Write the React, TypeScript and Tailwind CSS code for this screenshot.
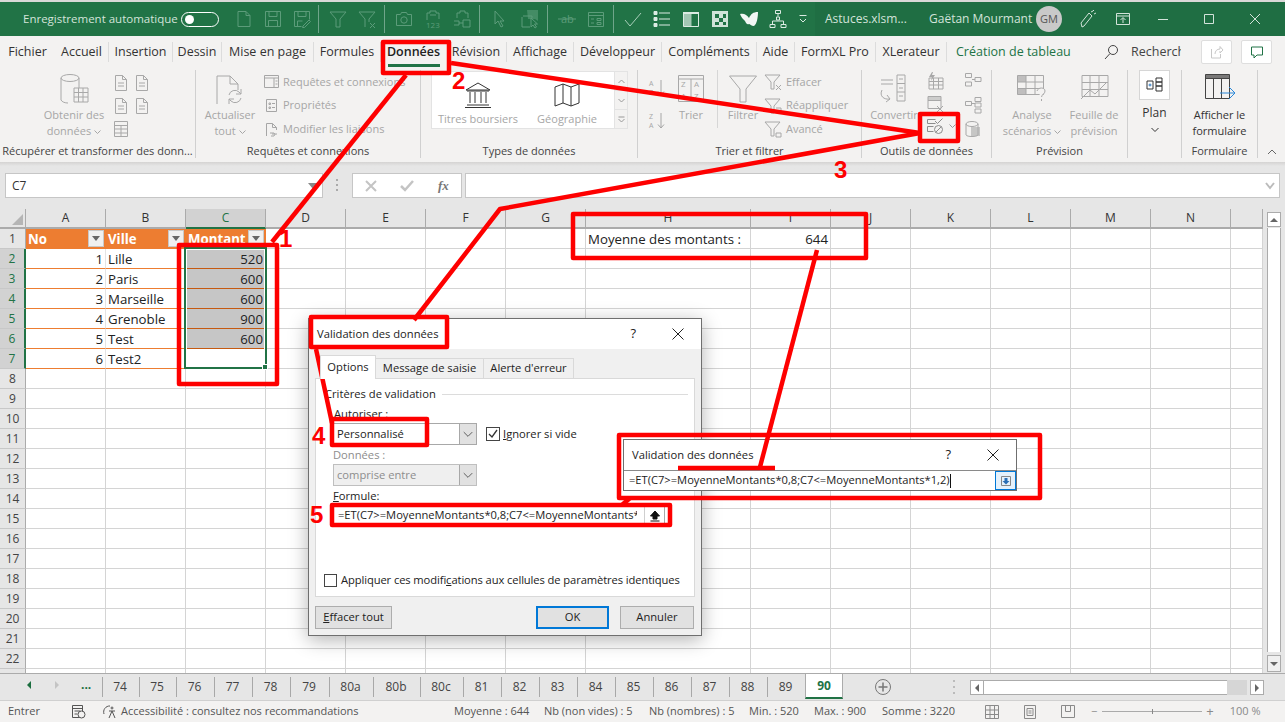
import React from 'react';

const cols = ['A', 'B', 'C', 'D', 'E', 'F', 'G', 'H', 'I', 'J', 'K', 'L', 'M', 'N', ''];
const colW = ['w-[80px]', 'w-[80px]', 'w-[80px]', 'w-[80px]', 'w-[80px]', 'w-[80px]', 'w-[80px]', 'w-[165px]', 'w-[80px]', 'w-[80px]', 'w-[80px]', 'w-[80px]', 'w-[80px]', 'w-[80px]', 'w-[32px]'];
const rows = Array.from({ length: 23 }, (_, i) => i + 1);
const table: Record<number, [string, string, string]> = {
  2: ['1', 'Lille', '520'],
  3: ['2', 'Paris', '600'],
  4: ['3', 'Marseille', '600'],
  5: ['4', 'Grenoble', '900'],
  6: ['5', 'Test', '600'],
  7: ['6', 'Test2', ''],
};
const tabs = [
  ['Fichier', 'w-[55px]', ''],
  ['Accueil', 'w-[54px]', 'sep'],
  ['Insertion', 'w-[64px]', 'sep'],
  ['Dessin', 'w-[49px]', 'sep'],
  ['Mise en page', 'w-[92px]', 'sep'],
  ['Formules', 'w-[67px]', 'sep'],
  ['Données', 'w-[65px]', 'active'],
  ['Révision', 'w-[61px]', 'sep'],
  ['Affichage', 'w-[67px]', 'sep'],
  ['Développeur', 'w-[88px]', 'sep'],
  ['Compléments', 'w-[95px]', 'sep'],
  ['Aide', 'w-[38px]', 'sep'],
  ['FormXL Pro', 'w-[81px]', 'sep'],
  ['XLerateur', 'w-[71px]', 'sep'],
];
const sheetTabs = [
  ['74', 'w-[37px]'], ['75', 'w-[37px]'], ['76', 'w-[38px]'], ['77', 'w-[38px]'], ['78', 'w-[38px]'], ['79', 'w-[39px]'],
  ['80a', 'w-[44px]'], ['80b', 'w-[47px]'], ['80c', 'w-[43px]'], ['81', 'w-[38px]'], ['82', 'w-[38px]'], ['83', 'w-[38px]'],
  ['84', 'w-[38px]'], ['85', 'w-[38px]'], ['86', 'w-[38px]'], ['87', 'w-[38px]'], ['88', 'w-[38px]'], ['89', 'w-[38px]'],
];

function Ic({ w = 20, h = 20, vb, children, className = '' }: { w?: number; h?: number; vb?: string; children: React.ReactNode; className?: string }) {
  return (
    <svg width={w} height={h} viewBox={vb ?? `0 0 ${w} ${h}`} fill="none" stroke="currentColor" strokeWidth="1" className={`shrink-0 ${className}`}>
      {children}
    </svg>
  );
}

function TitleSlot({ children, w = 'w-[29px]' }: { children: React.ReactNode; w?: string }) {
  return <div className={`${w} flex justify-center`}>{children}</div>;
}

function TitleSep({ className = 'ml-[3px] mr-[4px]' }: { className?: string }) {
  return <div className={`h-[28px] w-px bg-[#6fa58a] ${className}`} />;
}

function TitleIcons() {
  return (
    <div className="ml-[10px] flex w-[586px] items-center text-[#5c9c7a]">
      <TitleSlot><Ic><path d="M4 2.5h8l4 4v11H4zM12 2.5v4h4" /></Ic></TitleSlot>
      <TitleSlot><Ic><path d="M2.5 2.5h15v15h-15zM6 2.5v5h8v-5M5.5 17.5v-6h9v6" /></Ic></TitleSlot>
      <TitleSlot><Ic><path d="M2.5 2.5h15v8M2.5 2.5v15h7M6 2.5v5h8v-5M5.5 17v-5h5M11 17l6-6 1.5 1.5-6 6h-2z" /></Ic></TitleSlot>
      <TitleSep className="ml-[2px] mr-[4px]" />
      <TitleSlot><Ic><path d="M2 3h16l-6 7v8h-4v-8z" /></Ic></TitleSlot>
      <TitleSlot><Ic><path d="M2 3h16l-6 7v3M8 18v-8L2 3M13 14l5 5M18 14l-5 5" /></Ic></TitleSlot>
      <TitleSep />
      <TitleSlot><Ic><path d="M2.5 5.5h4l1-2h5l1 2h4v11h-15z" /><circle cx="10" cy="11" r="3.2" /></Ic></TitleSlot>
      <TitleSlot><Ic><path d="M4 11V4h3V2h6v2h3v6M7 6h6" /><text x="3" y="19" fontSize="8" stroke="none" fill="currentColor">123</text></Ic></TitleSlot>
      <TitleSlot><Ic><path d="M5 9V4h3V2h5v2h3v5M2 12h5v4H2M11 11h7v7h-7zM7 14h4" /></Ic></TitleSlot>
      <TitleSep />
      <TitleSlot><Ic><path d="M6 2v13l3-3 3 6 2-1-3-5h4z" /></Ic></TitleSlot>
      <TitleSlot w="w-[31px]"><Ic><path d="M4 7h9v2M3 8v10h8" /><path d="M8 1h11v11l-3-2H9z" fill="currentColor" stroke="none" opacity=".6" /><path d="M12 9v9l2-2 2 3 1.5-1-2-3h3z" /></Ic></TitleSlot>
      <TitleSep />
      <TitleSlot><Ic><path d="M1 10h18" /><text x="4" y="14" fontSize="11" stroke="none" fill="currentColor">ab</text></Ic></TitleSlot>
      <TitleSlot><Ic><path d="M2.5 3.5h15v14h-15zM2.5 6.5h15M5 10h3M5 14h3M11 9.5h4v2h-4zM11 13.5h4v2h-4z" /></Ic></TitleSlot>
      <TitleSep />
      <TitleSlot><Ic className="text-[#a9cfba]"><path d="M2 11l5 6L18 4" /></Ic></TitleSlot>
      <TitleSlot><Ic className="text-[#dcebe3]"><path d="M7 4h11M7 10h11M7 16h11" /><path d="M2 2.5h3v3H2zM2 8.5h3v3H2zM2 14.5h3v3H2z" fill="currentColor" /></Ic></TitleSlot>
      <TitleSlot><Ic className="text-[#dcebe3]"><path d="M2.5 3.5h15v14h-15z" /><path d="M2.5 5h8v12.5h-8z" fill="currentColor" opacity=".7" stroke="none" /><path d="M2 4h16" strokeWidth="2" /></Ic></TitleSlot>
      <TitleSlot><Ic className="text-[#cfe3d8]"><path d="M2 2h16v16H2z" fill="currentColor" stroke="none" /><path d="M5 5h4v4H5zM13 5h3v4h-3zM9 9h4v4H9zM5 13h4v3H5zM13 13h3v3h-3z" fill="#217346" stroke="none" /></Ic></TitleSlot>
      <TitleSlot><Ic className="text-[#f2f7f4]"><path d="M1 5c4-1 7 1 9 4 2-4 4-6 9-6 0 5-1 12-4 14-3 0-4-2-5-2-2 1-3-1-4-3C4 10 2 8 1 5z" fill="currentColor" stroke="none" /></Ic></TitleSlot>
      <TitleSlot><Ic className="text-[#dcebe3]"><path d="M7.5 1.5h5v3h-5zM2 15.5h5v3H2zM13 15.5h5v3h-5zM4.5 15v-3h11v3M10 4.5v3M8.5 8h3v3h-3z" /></Ic></TitleSlot>
      <TitleSlot w="w-[22px]"><Ic w={12} h={12} className="text-[#dcebe3]"><path d="M2.5 2.5h7M3 6l3 3 3-3" /></Ic></TitleSlot>
    </div>
  );
}

function TitleBar() {
  return (
    <div className="flex h-[36px] shrink-0 border-t-2 border-[#dad9d8] bg-[#217346] text-[12px]">
      <div className="ml-[23px] flex w-[158px] items-center text-[11.5px] whitespace-nowrap text-[#d3e3da]">Enregistrement automatique</div>
      <div className="flex w-[38px] items-center">
        <div className="flex h-[15px] w-[38px] items-center rounded-full border border-white pl-[3px]">
          <div className="h-[9px] w-[9px] rounded-full bg-white" />
        </div>
      </div>
      <TitleIcons />
      <div className="flex flex-1 items-center bg-[#1f6e43] text-[#d3e3da]">
        <span className="ml-[10px] w-[104px]">Astuces.xlsm...</span>
        <span className="w-[107px]">Gaëtan Mourmant</span>
        <div className="flex h-[26px] w-[26px] items-center justify-center rounded-full bg-[#c9c9c9] text-[11px] text-[#555]">GM</div>
        <Ic className="ml-[15px] text-[#d3e3da]" vb="0 0 20 20"><path d="M5 18l-1-4L12 4l3 3-8 10zM14 3l2-1M17 5l2-1M16 1l1 1" /></Ic>
        <Ic className="ml-[18px] text-[#d3e3da]" w={16} h={16}><path d="M1.5 2.5h13v11h-13zM1.5 5h13M8 12V7M5.5 9L8 6.5 10.5 9" /></Ic>
        <Ic className="ml-[27px] text-[#d3e3da]" w={10} h={10}><path d="M0 5.5h10" /></Ic>
        <Ic className="ml-[36px] text-[#d3e3da]" w={10} h={10}><path d="M.5.5h9v9h-9z" /></Ic>
        <Ic className="ml-[36px] text-[#d3e3da]" w={10} h={10}><path d="M0 0l10 10M10 0L0 10" /></Ic>
      </div>
    </div>
  );
}

function TabRow() {
  return (
    <div className="flex h-[32px] shrink-0 items-center text-[12.5px] text-[#333]">
      <div className="flex">
        {tabs.map(([t, w, kind]) => (
          <div key={t} className={`relative flex h-[20px] items-center justify-center ${w} ${kind === 'sep' ? 'border-r border-[#dcdcdc]' : ''}`}>
            <span className={kind === 'active' ? 'font-semibold text-[#222]' : ''}>{t}</span>
            {kind === 'active' && <div className="absolute bottom-[-5px] left-[7px] h-[3px] w-[52px] bg-[#217346]" />}
          </div>
        ))}
      </div>
      <span className="ml-[9px] w-[147px] whitespace-nowrap text-[#217346]">Création de tableau</span>
      <Ic w={16} h={16} className="text-[#444]"><circle cx="10" cy="6" r="4.5" /><path d="M7 9.5L2 15" /></Ic>
      <span className="ml-[12px] w-[50px] overflow-hidden whitespace-nowrap text-[#444]">Recherche</span>
      <div className="ml-[20px] flex h-[24px] w-[31px] items-center justify-center rounded-[2px] border border-[#dedede] bg-white text-[#c8c8c8]">
        <Ic w={14} h={14}><path d="M1.5 4v9h9V9M5 9c0-3 2-5 5-5V1.5L13 5l-3 3V6" /></Ic>
      </div>
      <div className="ml-[9px] flex h-[24px] w-[31px] items-center justify-center rounded-[2px] border border-[#dedede] bg-white text-[#217346]">
        <Ic w={14} h={14}><path d="M1.5 2h11v8H7l-3 3v-3H1.5z" /></Ic>
      </div>
    </div>
  );
}

function Large({ w, icon, lines, caret, dark }: { w: string; icon: React.ReactNode; lines: string[]; caret?: boolean; dark?: boolean }) {
  return (
    <div className={`flex flex-col items-center ${w} ${dark ? 'text-[#333]' : 'text-[#a6a6a6]'}`}>
      <div className="flex h-[37px] items-start justify-center">{icon}</div>
      <div className="text-center text-[11px] leading-[16px] whitespace-nowrap">
        {lines.map((l, i) => (
          <div key={l}>
            {l}
            {caret && i === lines.length - 1 && <Caret />}
          </div>
        ))}
      </div>
    </div>
  );
}

function Caret() {
  return <Ic w={7} h={5} className="ml-[3px] inline-block align-middle"><path d="M.5 .5l3 3 3-3" /></Ic>;
}

function SmallRow({ icon, text }: { icon: React.ReactNode; text?: string }) {
  return (
    <div className="flex h-[24px] items-center whitespace-nowrap text-[11px] text-[#a6a6a6]">
      {icon}
      {text && <span className="ml-[4px]">{text}</span>}
    </div>
  );
}

function Group({ w, label, children, border = true }: { w: string; label: string; children: React.ReactNode; border?: boolean }) {
  return (
    <div className={`flex h-[88px] flex-col ${w} ${border ? 'border-r border-[#d0d0d0]' : ''}`}>
      <div className="flex h-[72px] overflow-hidden">{children}</div>
      <div className="mt-[3px] text-center text-[11px] leading-[14px] whitespace-nowrap text-[#444]">{label}</div>
    </div>
  );
}

const DocIcon = () => (
  <Ic w={16} h={18} className="text-[#a8a8a8]"><path d="M2.5 1.5h7l4 4v11h-11zM9.5 1.5v4h4M5 9h6M5 12h6" /></Ic>
);
const FunnelSmall = ({ x }: { x: string }) => (
  <Ic w={18} h={18} className="text-[#a8a8a8]"><path d={`M1 2h15l-6 7v7H7V9z${x}`} /></Ic>
);
const SortArrow = () => (
  <Ic w={8} h={16}><path d="M4 0v15M1 11.5L4 15l3-3.500" /></Ic>
);

function SortLetters({ a, b }: { a: string; b: string }) {
  return (
    <div className="flex w-[7px] flex-col text-[7px] leading-[9px]">
      <span>{a}</span>
      <span>{b}</span>
    </div>
  );
}

function Ribbon() {
  return (
    <div className="flex h-[94px] shrink-0 items-start pt-[2px]">
      <Group w="w-[196px]" label="Récupérer et transformer des donn...">
        <div className="ml-[38px]">
          <Large w="w-[72px]" caret lines={['Obtenir des', 'données']} icon={
            <Ic w={30} h={34} className="mt-[3px] text-[#a8a8a8]"><ellipse cx="11" cy="5" rx="9" ry="3.5" /><path d="M2 5v22c1 2 4 3 7 3M20 5v10" /><path d="M15 15h14v14H15zM15 19.5h14M15 24h14M19.5 15v14M24 15v14" /></Ic>
          } />
        </div>
        <div className="ml-[3px] flex w-[40px] flex-wrap content-start gap-y-[5px] pt-[4px]">
          <div className="w-[21px]"><DocIcon /></div><DocIcon />
          <div className="w-[21px]"><DocIcon /></div><DocIcon />
          <Ic w={16} h={18} className="text-[#a8a8a8]"><path d="M1.5 1.5h13v15h-13zM1.5 5.5h13M1.5 9h13M1.5 13h13M8 5.5v11" /></Ic>
        </div>
      </Group>
      <Group w="w-[225px]" label="Requêtes et connexions">
        <div className="ml-[6px]">
          <Large w="w-[56px]" caret lines={['Actualiser', 'tout']} icon={
            <Ic w={32} h={34} className="mt-[3px] text-[#a8a8a8]"><path d="M3 31V3h13l8 8v6M16 3v8h8" /><path d="M15 22a6 6 0 0 1 10-3l2 2M27 25a6 6 0 0 1-10 3l-2-2M27 16v5h-5M15 31v-5h5" /></Ic>
          } />
        </div>
        <div className="ml-[6px] flex flex-col">
          <SmallRow text="Requêtes et connexions" icon={<Ic w={15} h={15}><path d="M.5 1.5h14v12H.5zM.5 4h14M10 4v9.5M11.5 7h2M11.5 10h2" /></Ic>} />
          <SmallRow text="Propriétés" icon={<Ic w={15} h={15}><path d="M2.5 1.5h10v12h-10zM5 5h1.5v1.500H5zM8 5.500h3M5 9h1.500v1.500H5zM8 9.500h3" /></Ic>} />
          <SmallRow text="Modifier les liaisons" icon={<Ic w={15} h={15}><path d="M2.5 14V1.5h6l4 4V8M8.5 1.5v4h4M6 11h4a2 2 0 0 1 0 3H7M8 12h5" /></Ic>} />
        </div>
      </Group>
      <Group w="w-[217px]" label="Types de données">
        <div className="ml-[10px] mt-[1px] flex h-[58px] w-[184px] border border-[#e3e3e3] bg-white pt-[2px]">
          <Large w="w-[92px]" lines={['Titres boursiers']} icon={
            <Ic w={28} h={26} className="mt-[8px] text-[#333]"><path d="M14 1L2 8h24zM3 23h22M1 25.500h26M6 10v11M11 10v11M17 10v11M22 10v11M3 9h22" /></Ic>
          } />
          <Large w="w-[86px]" lines={['Géographie']} icon={
            <Ic w={28} h={26} className="mt-[8px] text-[#333]"><path d="M2 5l8-3 8 3 8-3v19l-8 3-8-3-8 3zM10 2v19M18 5v19" /></Ic>
          } />
        </div>
        <div className="mt-[1px] flex w-[13px] flex-col text-[#999]">
          <div className="flex h-[20px] items-center justify-center border border-l-0 border-[#e3e3e3]"><Ic w={7} h={5}><path d="M.5 4l3-3 3 3" /></Ic></div>
          <div className="flex h-[19px] items-center justify-center border border-l-0 border-t-0 border-[#e3e3e3]"><Ic w={7} h={5}><path d="M.5 1l3 3 3-3" /></Ic></div>
          <div className="flex h-[19px] items-center justify-center border border-l-0 border-t-0 border-[#e3e3e3]"><Ic w={7} h={7}><path d="M.5 1h6M.5 3l3 3 3-3" /></Ic></div>
        </div>
      </Group>
      <Group w="w-[224px]" label="Trier et filtrer">
        <div className="ml-[11px] flex w-[26px] flex-col pt-[9px] text-[#a6a6a6]">
          <div className="flex items-center gap-[1px]"><SortLetters a="A" b="Z" /><SortArrow /></div>
          <div className="mt-[15px] flex items-center gap-[1px]"><SortLetters a="Z" b="A" /><SortArrow /></div>
        </div>
        <div className="ml-[-2px]">
          <Large w="w-[36px]" lines={['Trier']} icon={
            <Ic w={28} h={28} className="mt-[4px] text-[#a8a8a8]"><path d="M1.500 1.500h25v26h-25zM1.500 5h25M14 5v22.500" /><text x="4" y="13" fontSize="8" stroke="none" fill="currentColor">Z</text><text x="17" y="13" fontSize="8" stroke="none" fill="currentColor">A</text><text x="4" y="25" fontSize="8" stroke="none" fill="currentColor">A</text><text x="17" y="25" fontSize="8" stroke="none" fill="currentColor">Z</text></Ic>
          } />
        </div>
        <div className="ml-[8px] h-[58px] w-px bg-[#d6d6d6]" />
        <div className="ml-[5px]">
          <Large w="w-[40px]" lines={['Filtrer']} icon={
            <Ic w={30} h={30} className="mt-[4px] text-[#a8a8a8]"><path d="M1.500 2h27L18 15v13h-6V15z" /></Ic>
          } />
        </div>
        <div className="ml-[1px] flex flex-col">
          <SmallRow text="Effacer" icon={<FunnelSmall x="M12 12l5 5M17 12l-5 5" />} />
          <SmallRow text="Réappliquer" icon={<FunnelSmall x="M12 11h5v5" />} />
          <SmallRow text="Avancé" icon={<FunnelSmall x="M12 13h5v4h-5z" />} />
        </div>
      </Group>
      <Group w="w-[130px]" label="Outils de données">
        <div className="ml-[9px]">
          <Large w="w-[46px]" lines={['Convertir']} icon={
            <Ic w={30} h={32} className="mt-[3px] text-[#a8a8a8]"><path d="M2 7h12M2 11h12M18 2h8v26h-8zM18 10.500h8M18 19h8M20 6h4M20 15h4M20 23h4M3 17c-3 6 2 10 8 9M8 22l3 4-4 3" /></Ic>
          } />
        </div>
        <div className="ml-[9px] flex w-[38px] flex-col items-start pt-[2px] text-[#a8a8a8]">
          <Ic w={18} h={18}><path d="M3 6h14v11H3zM3 9.500h14M3 13h14M7.500 6v11M12.500 6v11" /><path d="M6 0L3 5h3l-1 4 4-6H6l1-3z" fill="currentColor" stroke="none" /></Ic>
          <Ic w={18} h={18} className="mt-[5px]"><path d="M2 1.500h13v12H2zM2 5.500h13" /><path d="M2 1.500h13v4H2z" fill="currentColor" stroke="none" opacity=".5" /><path d="M11 11l6 6M17 11l-6 6" /></Ic>
          <div className="mt-[5px] flex items-center text-[#8c8c8c]">
            <Ic w={20} h={17}><path d="M1.500 1.500h8M1.500 5.500h8M1.500 1.500v4M1.500 8.500h6M1.500 13.500h6M1.500 8.500v5M9 3l2.500 2.500 5-5" /><circle cx="12.500" cy="11.500" r="4" /><path d="M9.800 14.200l5.400-5.400" /></Ic>
            <Ic w={7} h={5} className="ml-[3px] text-[#999]"><path d="M.5 .5l3 3 3-3" /></Ic>
          </div>
        </div>
        <div className="flex flex-col items-start gap-[6px] pt-[2px] text-[#a8a8a8]">
          <Ic w={18} h={18}><path d="M1.500 1.500h6v4h-6zM1.500 10h6v4h-6zM11 5.500h6v4h-6zM8 7.500h3" /></Ic>
          <Ic w={18} h={18}><path d="M1.500 5.500h6v4h-6zM11 1.500h6v4h-6zM11 7h6v4h-6zM11 13h6v4h-6zM8 7.500h3" /></Ic>
          <Ic w={18} h={18}><ellipse cx="8" cy="4" rx="6" ry="2.500" /><path d="M2 4v11c1 2 11 2 12 0V4" /><path d="M7 7h9v9H7z" fill="currentColor" stroke="none" opacity=".6" /></Ic>
        </div>
      </Group>
      <Group w="w-[136px]" label="Prévision">
        <div className="ml-[10px]">
          <Large w="w-[60px]" caret lines={['Analyse', 'scénarios']} icon={
            <Ic w={32} h={32} className="mt-[3px] text-[#a8a8a8]"><path d="M1.500 2.500h26v19h-26zM1.500 9h26M1.500 15.500h26M10 2.500v19M19 2.500v19" /><path d="M1.500 2.500H10V9H1.500zM1.500 15.500H10v6H1.500z" fill="currentColor" opacity=".7" stroke="none" /><path d="M21 18c1-4 8-4 8 0 0 3-3 3-3.500 6M25.500 26v2" fill="#f3f2f1" /></Ic>
          } />
        </div>
        <div className="ml-[2px]">
          <Large w="w-[60px]" lines={['Feuille de', 'prévision']} icon={
            <Ic w={30} h={30} className="mt-[3px] text-[#a8a8a8]"><path d="M3 2.500h26v21H3zM3 9.500h26M3 16.500h26M11 2.500v21M20 2.500v21M2 26l9-9 5 4 11-11" /></Ic>
          } />
        </div>
      </Group>
      <Group w="w-[54px]" label="">
        <div className="flex w-full flex-col items-center text-[#333]">
          <div className="flex h-[30px] w-[31px] items-center justify-center border border-[#d6d6d6] bg-white">
            <Ic w={20} h={18}><path d="M2 5h6v8H2zM11 2h6v4h-6zM11 6h6v4h-6zM11 10h6v5h-6z" /><path d="M3.500 9h3M5 7.500v3" stroke="#2b79c2" /></Ic>
          </div>
          <div className="mt-[5px] text-[12px] leading-[16px]">Plan</div>
          <Ic w={8} h={6} className="mt-[6px]"><path d="M.5 1l3.500 3.500L7.500 1" /></Ic>
        </div>
      </Group>
      <Group w="w-[76px]" label="Formulaire">
        <div className="w-full">
          <Large w="w-full" dark lines={['Afficher le', 'formulaire']} icon={
            <Ic w={32} h={30} className="mt-[3px] text-[#444]"><path d="M1.500 1.500h24v24h-24zM1.500 5.500h24M9.500 5.500v20M17.500 5.500v20" /><path d="M1.500 1.500h24v4h-24z" fill="currentColor" stroke="none" opacity=".7" /><path d="M16 20h14M25 14l6 6-6 6" stroke="#2b88d8" /></Ic>
          } />
        </div>
      </Group>
      <div className="ml-[8px] mt-[78px] text-[#666]"><Ic w={12} h={8}><path d="M2 6l4-4 4 4" /></Ic></div>
    </div>
  );
}

function FormulaBar() {
  return (
    <div className="flex h-[47px] shrink-0 items-start bg-[#e6e6e6] bg-gradient-to-b from-[#d4d3d2] via-[#e6e6e6] to-[#e6e6e6] bg-[length:100%_8px] bg-no-repeat pl-[5px] pt-[11px]">
      <div className="flex h-[25px] w-[318px] items-center justify-between border border-[#c6c6c6] bg-white pl-[6px] pr-[4px] text-[12px] text-[#333]">
        C7
        <span className="h-0 w-0 border-x-[5px] border-t-[6px] border-x-transparent border-t-[#8a8a8a]" />
      </div>
      <div className="mx-[13px] mt-[6px] flex h-[12px] flex-col justify-between">
        <i className="block h-[2px] w-[2px] bg-[#aaa]" /><i className="block h-[2px] w-[2px] bg-[#aaa]" /><i className="block h-[2px] w-[2px] bg-[#aaa]" />
      </div>
      <div className="ml-[1px] flex h-[25px] w-[110px] items-center border border-[#c6c6c6] bg-white text-[#c4c4c4]">
        <Ic w={12} h={12} className="ml-[12px]"><path d="M1 1l10 10M11 1L1 11" strokeWidth="2" /></Ic>
        <Ic w={14} h={12} className="ml-[23px]"><path d="M1 6l4 4 8-9" strokeWidth="2.500" /></Ic>
        <span className="ml-[24px] text-[13px] font-bold text-[#777] italic [font-family:'Liberation_Serif',serif]">fx</span>
      </div>
      <div className="ml-[3px] flex h-[25px] flex-1 items-center justify-end border border-[#c6c6c6] bg-white pr-[3px] text-[#bbb]">
        <Ic w={12} h={10}><path d="M2 2l4 5 4-5" strokeWidth="2" /></Ic>
      </div>
      <div className="w-[5px]" />
    </div>
  );
}

function FilterBtn() {
  return (
    <span className="absolute right-[1px] top-[1px] flex h-[17px] w-[16px] items-center justify-center border border-[#c8c8c8] bg-[#f0f0f0]">
      <span className="h-0 w-0 border-x-[4px] border-t-[5px] border-x-transparent border-t-[#666]" />
    </span>
  );
}

function Cell({ r, c }: { r: number; c: number }) {
  const base = `relative h-[20px] shrink-0 border-r border-b px-[2px] text-[13.25px] leading-[20px] text-[#222] whitespace-nowrap ${colW[c]}`;
  if (r === 1 && c < 3) {
    return (
      <div className={`${base} border-[#ed7d31] bg-[#ed7d31] font-bold text-white`}>
        {['No', 'Ville', 'Montant'][c]}
        <FilterBtn />
      </div>
    );
  }
  if (table[r] && c < 3) {
    const grey = c === 2 && r < 7;
    const color = grey ? 'bg-[#c6c6c6] border-b-[#c55a11] border-r-[#c6c6c6]' : 'border-b-[#ed7d31] border-r-[#e4e4e4]';
    return <div className={`${base} ${color} ${c === 1 ? '' : 'text-right'}`}>{table[r][c]}</div>;
  }
  if (r === 1 && c === 7) return <div className={`${base} border-[#d4d4d4]`}>Moyenne des montants :</div>;
  if (r === 1 && c === 8) return <div className={`${base} border-[#d4d4d4] text-right`}>644</div>;
  return <div className={`${base} border-[#d4d4d4]`} />;
}

function Sheet() {
  return (
    <div className="relative flex h-[464px] shrink-0 overflow-hidden bg-[#e6e6e6]">
      <div className="w-[1263px] shrink-0 overflow-hidden">
        <div className="flex h-[20px] w-[1263px]">
          <div className="flex w-[26px] shrink-0 items-end justify-end border-r border-b-2 border-[#ababab] pb-[2px] pr-[2px]">
            <span className="h-0 w-0 border-b-[11px] border-l-[11px] border-b-[#b5b5b5] border-l-transparent" />
          </div>
          {cols.map((c, i) => (
            <div key={i} className={`flex shrink-0 items-center justify-center border-r border-b-2 border-[#ababab] text-[12px] text-[#333] ${colW[i]} ${i === 2 ? 'border-b-[#217346] bg-[#d2d2d2] text-[#217346]' : ''}`}>
              {c}
            </div>
          ))}
        </div>
        {rows.map((r) => (
          <div key={r} className="flex bg-white">
            <div className={`flex h-[20px] w-[26px] shrink-0 items-center justify-center border-b border-[#c8c8c8] text-[12px] ${r >= 2 && r <= 7 ? 'border-r-2 border-r-[#217346] bg-[#d2d2d2] text-[#217346]' : 'border-r border-r-[#ababab] bg-[#e6e6e6] text-[#444]'}`}>
              {r < 23 ? r : ''}
            </div>
            {cols.map((_, c) => <Cell key={c} r={r} c={c} />)}
          </div>
        ))}
      </div>
      {/* plage sélectionnée */}
      <div className="absolute left-[184px] top-[38px] h-[122px] w-[83px] border-2 border-[#217346] shadow-[inset_0_0_0_1px_white]">
        <span className="absolute bottom-[-3px] right-[-3px] h-[6px] w-[6px] border border-white bg-[#217346]" />
      </div>
      <div className="ml-[4px] flex w-[14px] flex-col pt-[3px]">
        <div className="flex h-[15px] items-center justify-center border border-[#ababab] bg-white">
          <span className="h-0 w-0 border-x-[4px] border-b-[4px] border-x-transparent border-b-[#666]" />
        </div>
        <div className="mt-[1px] h-[424px] border-x border-[#ababab] bg-white" />
        <div className="mt-[3px] flex h-[17px] items-center justify-center border border-[#ababab] bg-[#f0f0f0]">
          <span className="h-0 w-0 border-x-[4px] border-t-[4px] border-x-transparent border-t-[#666]" />
        </div>
      </div>
    </div>
  );
}

function SheetTabs() {
  return (
    <div className="flex h-[27px] shrink-0 items-start border-t border-[#ababab] bg-[#e6e6e6] text-[12px] text-[#444]">
      <div className="flex h-[22px] w-[102px] items-center">
        <span className="ml-[27px] h-0 w-0 border-y-[4px] border-r-[4px] border-y-transparent border-r-[#1b6e3f]" />
        <span className="ml-[24px] h-0 w-0 border-y-[4px] border-l-[4px] border-y-transparent border-l-[#c4c4c4]" />
        <span className="ml-[22px] font-bold text-[#1b6e3f]">...</span>
      </div>
      <div className="mt-[3px] flex">
        {sheetTabs.map(([t, w]) => (
          <div key={t} className={`flex h-[20px] items-center justify-center border-l border-[#a8a8a8] pr-[2px] ${w}`}>{t}</div>
        ))}
      </div>
      <div className="flex h-[25px] w-[38px] items-center justify-center border-x border-b-2 border-[#ababab] border-b-[#217346] bg-white pt-[1px] text-[12px] font-bold text-[#217346]">90</div>
      <div className="ml-[30px] mt-[3px] flex h-[20px] w-[20px] items-center justify-center text-[#777]">
        <Ic w={18} h={18}><circle cx="9" cy="9" r="7.500" /><path d="M9 4.500v9M4.500 9h9" strokeWidth="1.500" /></Ic>
      </div>
      <div className="ml-[60px] mt-[6px] flex h-[14px] flex-col justify-between">
        <i className="block h-[2px] w-[2px] bg-[#bbb]" /><i className="block h-[2px] w-[2px] bg-[#bbb]" /><i className="block h-[2px] w-[2px] bg-[#bbb]" />
      </div>
      <div className="ml-[15px] mt-[6px] flex h-[15px] w-[294px]">
        <div className="flex w-[14px] items-center justify-center border border-[#ababab] bg-white">
          <span className="h-0 w-0 border-y-[4px] border-r-[4px] border-y-transparent border-r-[#666]" />
        </div>
        <div className="w-[243px] border-y border-[#ababab] bg-white" />
        <div className="w-[20px] bg-[#d6d6d6]" />
        <div className="ml-[3px] flex w-[14px] items-center justify-center border border-[#ababab] bg-white">
          <span className="h-0 w-0 border-y-[4px] border-l-[4px] border-y-transparent border-l-[#666]" />
        </div>
      </div>
    </div>
  );
}

function StatusBar() {
  return (
    <div className="flex h-[22px] shrink-0 items-center border-t border-[#d0d0d0] bg-[#f3f2f1] text-[11px] whitespace-nowrap text-[#555]">
      <span className="ml-[8px] w-[63px]">Entrer</span>
      <Ic w={15} h={15} className="text-[#555]"><path d="M1.500 1.500h10v12h-10zM1.500 4.500h10M3.500 7h6M3.500 10h3" /><circle cx="10.500" cy="10.500" r="3.500" fill="#f3f2f1" /></Ic>
      <Ic w={16} h={16} className="ml-[15px] text-[#555]"><path d="M9 2a6 6 0 0 0-6 8M8 7h6M11 7l-3 7M11 7l3 7" /><circle cx="11" cy="4" r="1" /></Ic>
      <span className="ml-[4px] w-[333px]">Accessibilité : consultez nos recommandations</span>
      <span className="w-[90px]">Moyenne : 644</span>
      <span className="w-[105px]">Nb (non vides) : 5</span>
      <span className="w-[100px]">Nb (nombres) : 5</span>
      <span className="w-[65px]">Min. : 520</span>
      <span className="w-[68px]">Max. : 900</span>
      <span className="w-[103px]">Somme : 3220</span>
      <Ic w={14} h={14} className="text-[#8a8a8a]"><path d="M.5.500h13v13H.5zM.5 5h13M.5 9.500h13M5 .5v13M9.500.5v13" /></Ic>
      <Ic w={14} h={14} className="ml-[24px] text-[#8a8a8a]"><path d="M1.500.500h11v13h-11zM4 3.500h6v7H4zM5.500 6h3M5.500 8h3" /></Ic>
      <Ic w={14} h={14} className="ml-[24px] text-[#8a8a8a]"><path d="M.5.500h13v12H.5zM4.500.5v6h5v-6" /></Ic>
      <span className="ml-[16px] text-[#8a8a8a]">−</span>
      <div className="relative ml-[5px] h-px w-[100px] bg-[#aaa]"><i className="absolute left-[50px] top-[-2px] block h-[5px] w-px bg-[#888]" /></div>
      <span className="ml-[4px] text-[13px] text-[#8a8a8a]">+</span>
      <span className="ml-[16px] text-[#8a8a8a]">100 %</span>
    </div>
  );
}

function CloseHelp() {
  return (
    <>
      <span className="text-[13px] text-[#222]">?</span>
      <Ic w={12} h={12} className="ml-[36px] text-[#222]"><path d="M.5.500l11 11M11.500.5l-11 11" /></Ic>
    </>
  );
}

function Arrow() {
  return (
    <Ic w={17} h={20} className="ml-auto border-l border-[#a8a8a8] bg-[#e1e1e1] text-[#555]"><path d="M4 8l4.500 4.500L13 8" /></Ic>
  );
}

function MainDialog() {
  return (
    <div className="absolute left-[308px] top-[318px] flex h-[318px] w-[394px] flex-col border border-[#6f6f6f] bg-[#f0f0f0] text-[11.2px] text-[#222] shadow-[0_4px_18px_rgba(0,0,0,0.3)]">
      <div className="flex h-[30px] shrink-0 items-center bg-white pl-[8px] pr-[17px]">
        <span className="flex-1">Validation des données</span>
        <CloseHelp />
      </div>
      <div className="ml-[11px] flex h-[29px] shrink-0 items-end">
        <div className="z-10 mb-[-1px] flex h-[24px] w-[56px] items-center justify-center border border-b-0 border-[#d9d9d9] bg-white">Options</div>
        <div className="flex h-[20px] w-[108px] items-center justify-center border border-b-0 border-l-0 border-[#d9d9d9]">Message de saisie</div>
        <div className="flex h-[20px] w-[90px] items-center justify-center border border-b-0 border-l-0 border-[#d9d9d9]">Alerte d'erreur</div>
      </div>
      <div className="mx-[6px] flex h-[219px] shrink-0 flex-col border border-[#d9d9d9] bg-white">
        <div className="mt-[7px] flex h-[16px] items-center pl-[9px] pr-[6px]">
          <span>Critères de validation</span>
          <div className="ml-[6px] h-px flex-1 bg-[#dcdcdc]" />
        </div>
        <div className="ml-[18px] mt-[4px] h-[16px] leading-[16px]">Autoriser :</div>
        <div className="ml-[17px] mt-[1px] flex h-[22px] items-center">
          <div className="flex h-[22px] w-[144px] items-center border border-[#a8a8a8] pl-[3px]">Personnalisé<Arrow /></div>
          <div className="ml-[9px] flex h-[14px] w-[14px] shrink-0 items-center justify-center border border-[#444]">
            <Ic w={12} h={12} className="text-[#333]"><path d="M2 6l3 3 5-7" strokeWidth="1.300" /></Ic>
          </div>
          <span className="ml-[3px]"><u>I</u>gnorer si vide</span>
        </div>
        <div className="ml-[17px] mt-[2px] h-[16px] leading-[16px] text-[#8d8d8d]">Données :</div>
        <div className="ml-[17px] mt-[1px] flex h-[22px] w-[144px] items-center border border-[#bfbfbf] bg-[#efefef] pl-[3px] text-[#8d8d8d]">comprise entre<Arrow /></div>
        <div className="ml-[17px] mt-[2px] h-[16px] leading-[16px]"><u>F</u>ormule:</div>
        <div className="ml-[15px] mt-[1px] flex h-[21px] w-[334px] items-center border border-[#a8a8a8] pl-[6px] text-[11.15px] whitespace-nowrap">
          <span className="w-[299px] overflow-hidden">=ET(C7&gt;=MoyenneMontants*0,8;C7&lt;=MoyenneMontants*1,2)</span>
          <div className="ml-auto flex h-[19px] w-[20px] items-center justify-center border-l border-[#cfcfcf]">
            <Ic w={12} h={12} className="text-[#111]"><path d="M6 1L1.500 6H4v3h4V6h2.500z" fill="currentColor" /><path d="M1.500 11h9" /></Ic>
          </div>
        </div>
        <div className="ml-[8px] mt-[47px] flex h-[14px] items-center">
          <div className="h-[13px] w-[13px] shrink-0 border border-[#444]" />
          <span className="ml-[4px] tracking-[-0.1px] whitespace-nowrap">Appliquer ces modifi<u>c</u>ations aux cellules de paramètres identiques</span>
        </div>
      </div>
      <div className="ml-[6px] mt-[9px] flex h-[23px] items-center">
        <div className="flex h-[23px] w-[77px] items-center justify-center border border-[#adadad] bg-[#e1e1e1]"><span><u>E</u>ffacer tout</span></div>
        <div className="ml-[144px] flex h-[23px] w-[73px] items-center justify-center border-2 border-[#0078d7] bg-[#e1e1e1]">OK</div>
        <div className="ml-[11px] flex h-[23px] w-[74px] items-center justify-center border border-[#adadad] bg-[#e1e1e1]">Annuler</div>
      </div>
    </div>
  );
}

function SmallDialog() {
  return (
    <div className="absolute left-[623px] top-[439px] flex h-[52px] w-[394px] flex-col border border-[#6f6f6f] bg-white text-[11.2px] text-[#222]">
      <div className="flex h-[30px] shrink-0 items-center pl-[8px] pr-[17px]">
        <span className="flex-1">Validation des données</span>
        <CloseHelp />
      </div>
      <div className="flex flex-1 items-center border-t border-[#8a8a8a] pl-[5px] text-[11.15px]">
        <span>=ET(C7&gt;=MoyenneMontants*0,8;C7&lt;=MoyenneMontants*1,2)</span>
        <i className="block h-[14px] w-px bg-[#111]" />
        <div className="ml-auto flex h-[19px] w-[21px] items-center justify-center border border-[#0078d7] bg-[#e5f1fb]">
          <Ic w={12} h={12} className="text-[#2b6fb5]"><path d="M1.500 1.500h9v9h-9z" stroke="#888" /><path d="M6 9.500L2.500 6H4.500V3h3v3h2z" fill="currentColor" stroke="none" /></Ic>
        </div>
      </div>
    </div>
  );
}

// annotations rouges par-dessus la capture
function Annotations() {
  return (
    <>
      <svg width="1285" height="722" className="pointer-events-none absolute left-0 top-0" fill="none" stroke="#fe0000" strokeWidth="4.5" strokeLinejoin="round">
        <path d="M383 42h66v31h-66z" />
        <path d="M451 63L920 133" />
        <path d="M920 133L500 209L414 320" />
        <path d="M406 75L272 242" />
        <path d="M920 114h38v27h-38z" />
        <path d="M179 245h98v139h-98z" />
        <path d="M573 214h293v44H573z" />
        <path d="M817 250L760 467" />
        <path d="M678 468h97" />
        <path d="M619 435h421v63H619z" />
        <path d="M630 498L622 505" />
        <path d="M332 505h338v20H332z" />
        <path d="M311 317h136v30H311z" />
        <path d="M316 349L332 423" />
        <path d="M332 419h95v26h-95z" />
      </svg>
      <span className="absolute left-[279px] top-[226px] text-[24px] leading-[26px] font-bold text-[#fe0000] [font-family:'Liberation_Sans',sans-serif]">1</span>
      <span className="absolute left-[452px] top-[68px] text-[24px] leading-[26px] font-bold text-[#fe0000] [font-family:'Liberation_Sans',sans-serif]">2</span>
      <span className="absolute left-[834px] top-[157px] text-[24px] leading-[26px] font-bold text-[#fe0000] [font-family:'Liberation_Sans',sans-serif]">3</span>
      <span className="absolute left-[312px] top-[423px] text-[24px] leading-[26px] font-bold text-[#fe0000] [font-family:'Liberation_Sans',sans-serif]">4</span>
      <span className="absolute left-[310px] top-[502px] text-[24px] leading-[26px] font-bold text-[#fe0000] [font-family:'Liberation_Sans',sans-serif]">5</span>
    </>
  );
}

export default function App() {
  return (
    <div className="relative flex h-[722px] w-[1285px] flex-col overflow-hidden bg-[#f3f2f1] font-['Open_Sans','Noto_Sans',sans-serif]">
      <TitleBar />
      <TabRow />
      <Ribbon />
      <FormulaBar />
      <Sheet />
      <SheetTabs />
      <StatusBar />
      <MainDialog />
      <SmallDialog />
      <Annotations />
    </div>
  );
}
